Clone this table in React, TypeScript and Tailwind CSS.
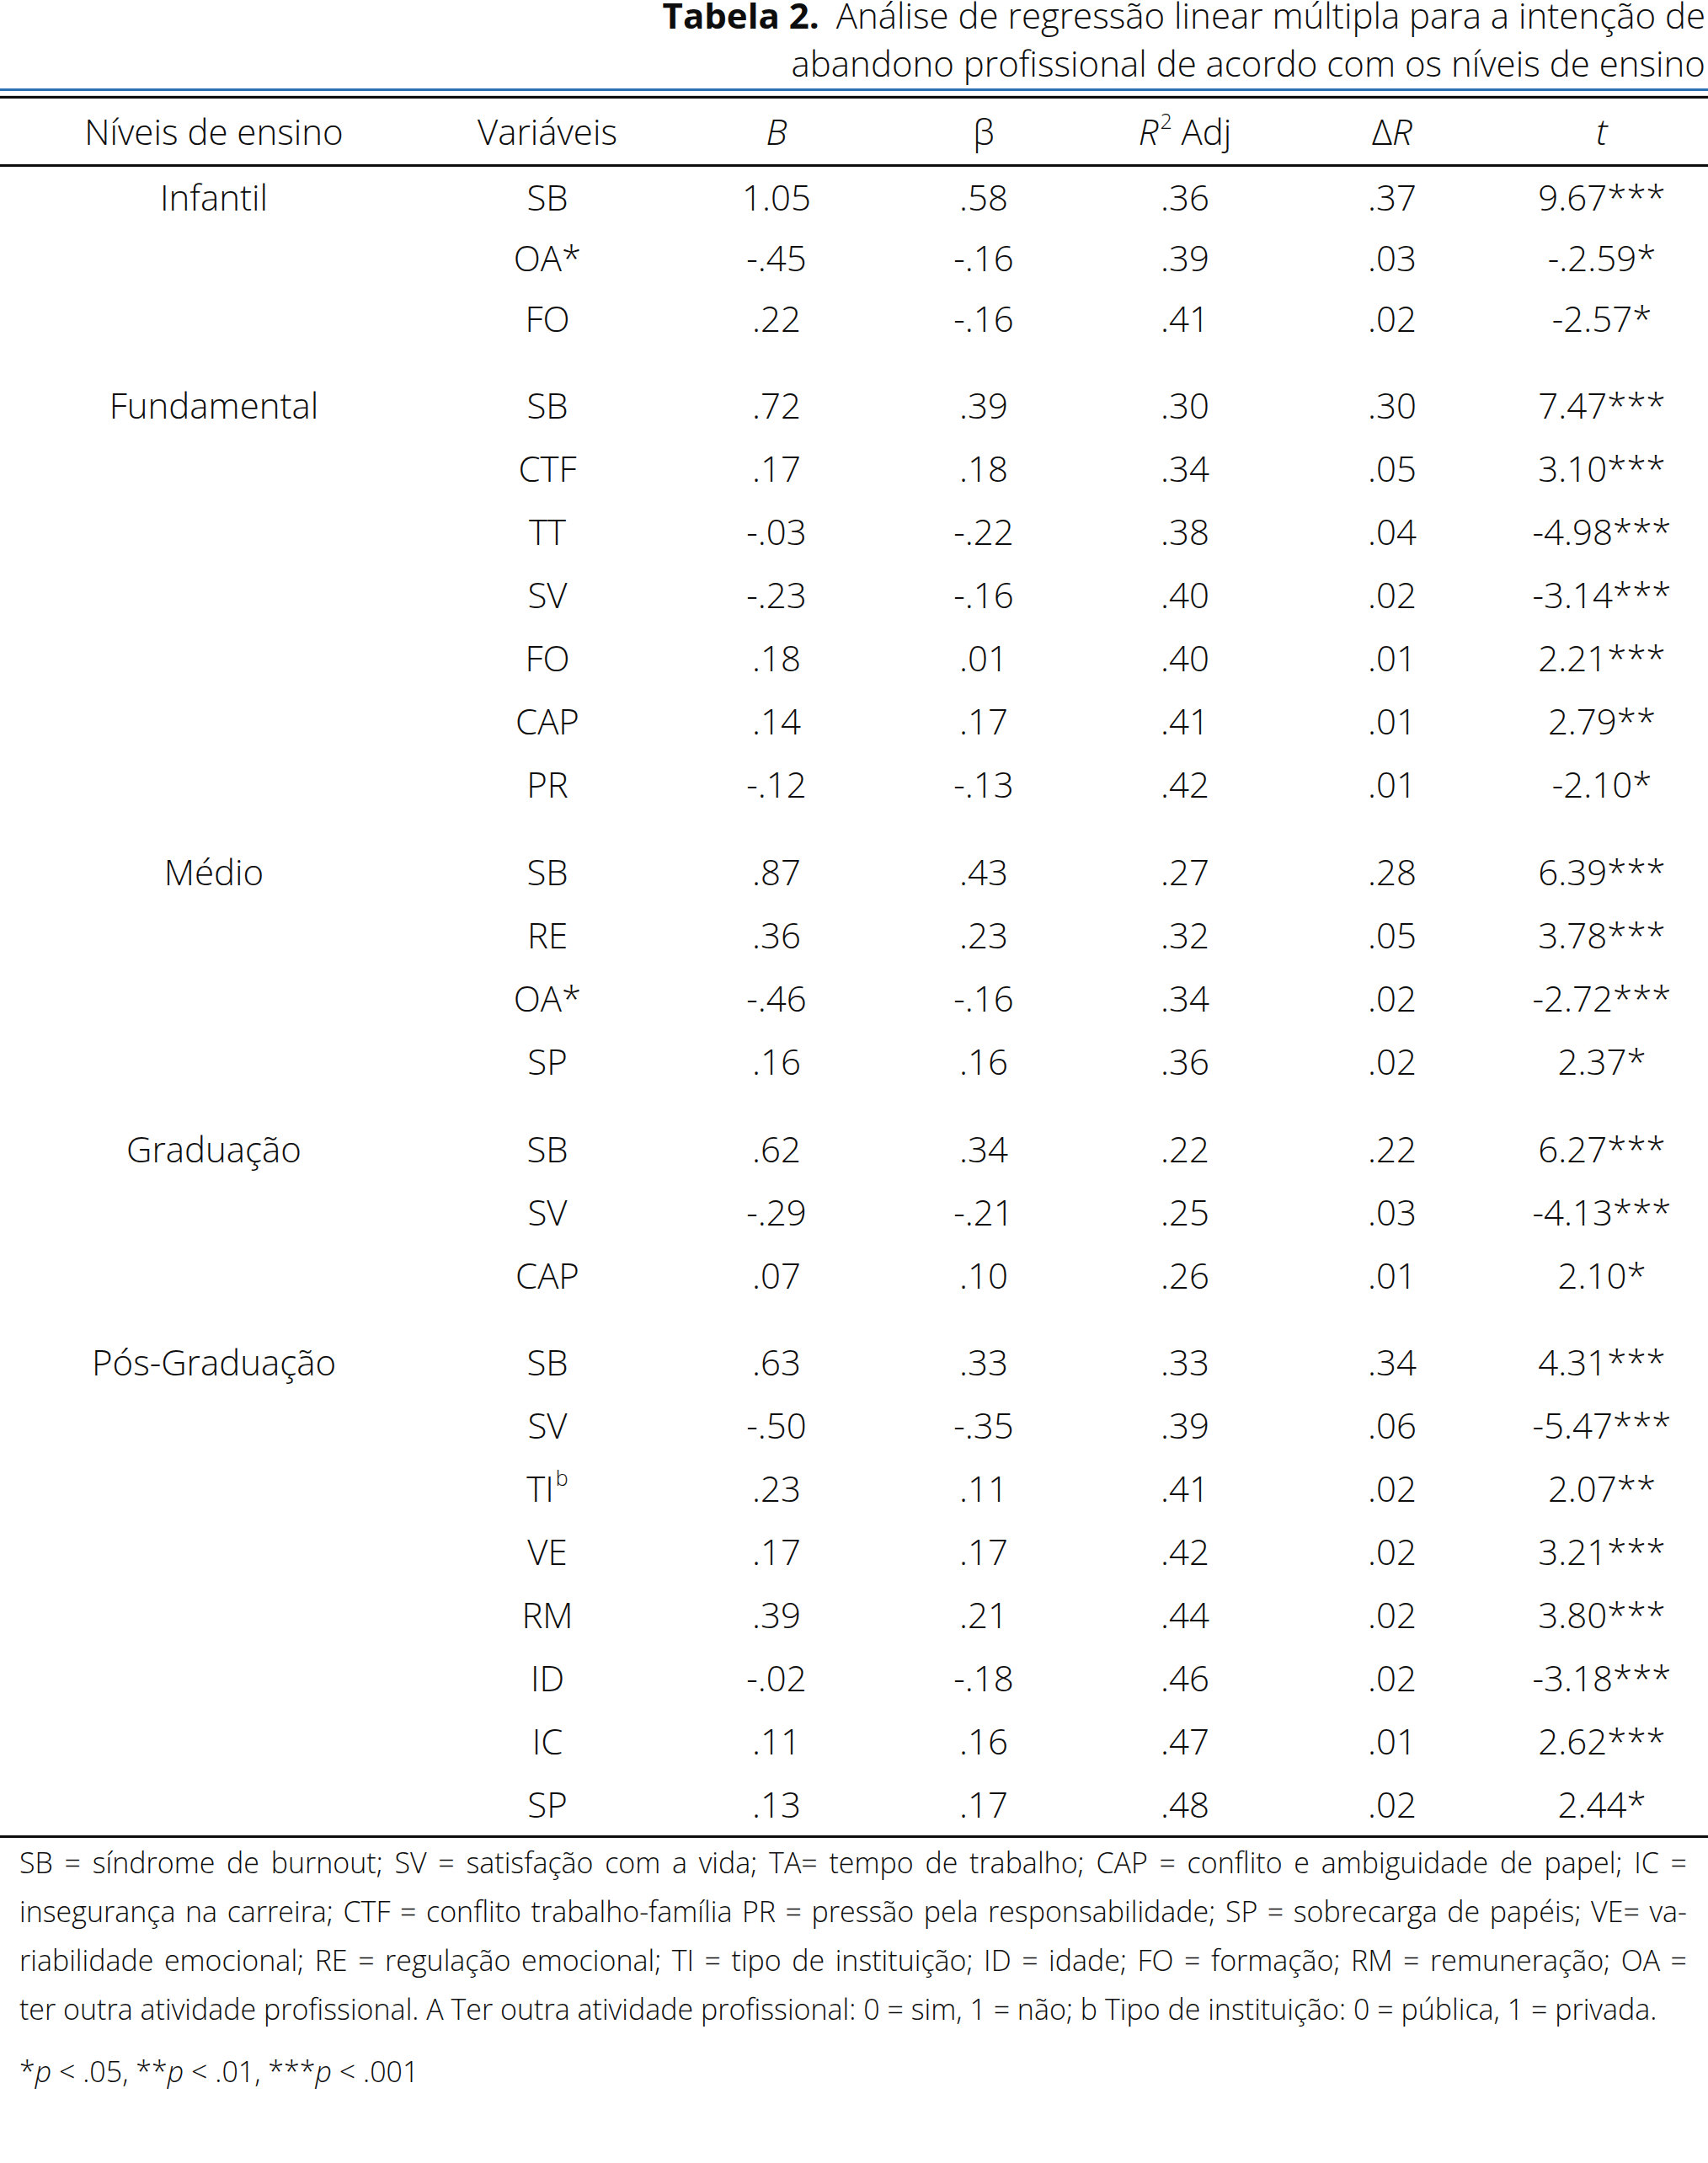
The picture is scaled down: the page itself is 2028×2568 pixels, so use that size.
import React from "react";

type Row = { v: React.ReactNode; b: string; beta: string; r2: string; dr: string; t: string };
type Group = { level: string; rowH: string; rows: Row[] };

const groups: Group[] = [
  {
    level: "Infantil",
    rowH: "h-[72px] leading-[72px]",
    rows: [
      { v: "SB", b: "1.05", beta: ".58", r2: ".36", dr: ".37", t: "9.67***" },
      { v: "OA*", b: "-.45", beta: "-.16", r2: ".39", dr: ".03", t: "-.2.59*" },
      { v: "FO", b: ".22", beta: "-.16", r2: ".41", dr: ".02", t: "-2.57*" },
    ],
  },
  {
    level: "Fundamental",
    rowH: "h-[75px] leading-[75px]",
    rows: [
      { v: "SB", b: ".72", beta: ".39", r2: ".30", dr: ".30", t: "7.47***" },
      { v: "CTF", b: ".17", beta: ".18", r2: ".34", dr: ".05", t: "3.10***" },
      { v: "TT", b: "-.03", beta: "-.22", r2: ".38", dr: ".04", t: "-4.98***" },
      { v: "SV", b: "-.23", beta: "-.16", r2: ".40", dr: ".02", t: "-3.14***" },
      { v: "FO", b: ".18", beta: ".01", r2: ".40", dr: ".01", t: "2.21***" },
      { v: "CAP", b: ".14", beta: ".17", r2: ".41", dr: ".01", t: "2.79**" },
      { v: "PR", b: "-.12", beta: "-.13", r2: ".42", dr: ".01", t: "-2.10*" },
    ],
  },
  {
    level: "Médio",
    rowH: "h-[75px] leading-[75px]",
    rows: [
      { v: "SB", b: ".87", beta: ".43", r2: ".27", dr: ".28", t: "6.39***" },
      { v: "RE", b: ".36", beta: ".23", r2: ".32", dr: ".05", t: "3.78***" },
      { v: "OA*", b: "-.46", beta: "-.16", r2: ".34", dr: ".02", t: "-2.72***" },
      { v: "SP", b: ".16", beta: ".16", r2: ".36", dr: ".02", t: "2.37*" },
    ],
  },
  {
    level: "Graduação",
    rowH: "h-[75px] leading-[75px]",
    rows: [
      { v: "SB", b: ".62", beta: ".34", r2: ".22", dr: ".22", t: "6.27***" },
      { v: "SV", b: "-.29", beta: "-.21", r2: ".25", dr: ".03", t: "-4.13***" },
      { v: "CAP", b: ".07", beta: ".10", r2: ".26", dr: ".01", t: "2.10*" },
    ],
  },
  {
    level: "Pós-Graduação",
    rowH: "h-[75px] leading-[75px]",
    rows: [
      { v: "SB", b: ".63", beta: ".33", r2: ".33", dr: ".34", t: "4.31***" },
      { v: "SV", b: "-.50", beta: "-.35", r2: ".39", dr: ".06", t: "-5.47***" },
      {
        v: (
          <>
            TI<sup className="text-[25px] ml-[2px] -top-[0.75em]">b</sup>
          </>
        ),
        b: ".23",
        beta: ".11",
        r2: ".41",
        dr: ".02",
        t: "2.07**",
      },
      { v: "VE", b: ".17", beta: ".17", r2: ".42", dr: ".02", t: "3.21***" },
      { v: "RM", b: ".39", beta: ".21", r2: ".44", dr: ".02", t: "3.80***" },
      { v: "ID", b: "-.02", beta: "-.18", r2: ".46", dr: ".02", t: "-3.18***" },
      { v: "IC", b: ".11", beta: ".16", r2: ".47", dr: ".01", t: "2.62***" },
      { v: "SP", b: ".13", beta: ".17", r2: ".48", dr: ".02", t: "2.44*" },
    ],
  },
];

const cols = "grid grid-cols-[508px_284px_260px_232px_246px_246px_252px] text-center";

export default function App() {
  return (
    <div
      className="w-[2028px] h-[2568px] overflow-hidden bg-white text-[#0d0d0d] font-light"
      style={{ fontFamily: '"Open Sans", "Noto Sans", sans-serif' }}
    >
      {/* caption */}
      <div className="-mt-[11px] pr-[3px] text-right text-[42px] leading-[57px]">
        <div>
          <span className="font-bold">Tabela 2.</span>
          <span className="ml-[20px]">Análise de regressão linear múltipla para a intenção de</span>
        </div>
        <div>abandono profissional de acordo com os níveis de ensino</div>
      </div>

      {/* top rules */}
      <div className="mt-[2px] h-[3px] bg-[#2b70b3]" />
      <div className="mt-[5px] h-[1px] bg-[#d9d9d9]" />
      <div className="h-[3px] bg-[#0d0d0d]" />

      {/* header */}
      <div className={`${cols} h-[81px] text-[42px] leading-[77px] border-b-[3px] border-[#0d0d0d]`}>
        <div>Níveis de ensino</div>
        <div>Variáveis</div>
        <div className="italic">B</div>
        <div>β</div>
        <div>
          <span className="italic">R</span>
          <sup className="text-[25px] ml-[2px] -top-[0.75em]">2</sup> Adj
        </div>
        <div>
          Δ<span className="italic">R</span>
        </div>
        <div className="italic">t</div>
      </div>

      {/* body */}
      <div className="text-[42px] border-b-[3px] border-[#0d0d0d]">
        {groups.map((g, gi) => (
          <div key={g.level} className={gi === 0 ? "" : gi === 4 ? "pt-[28px]" : "pt-[29px]"}>
            {g.rows.map((r, ri) => (
              <div key={ri} className={`${cols} ${g.rowH}`}>
                <div>{ri === 0 ? g.level : ""}</div>
                <div>{r.v}</div>
                <div>{r.b}</div>
                <div>{r.beta}</div>
                <div>{r.r2}</div>
                <div>{r.dr}</div>
                <div>{r.t}</div>
              </div>
            ))}
          </div>
        ))}
      </div>

      {/* notes */}
      <div className="pl-[23px] pr-[25px] text-[34px] leading-[58px]">
        <div className="whitespace-nowrap text-justify [text-align-last:justify]">
          SB = síndrome de burnout; SV = satisfação com a vida; TA= tempo de trabalho; CAP = conflito e ambiguidade de papel; IC =
        </div>
        <div className="whitespace-nowrap text-justify [text-align-last:justify]">
          insegurança na carreira; CTF = conflito trabalho-família PR = pressão pela responsabilidade; SP = sobrecarga de papéis; VE= va-
        </div>
        <div className="whitespace-nowrap text-justify [text-align-last:justify]">
          riabilidade emocional; RE = regulação emocional; TI = tipo de instituição; ID = idade; FO = formação; RM = remuneração; OA =
        </div>
        <div className="whitespace-nowrap">
          ter outra atividade profissional. A Ter outra atividade profissional: 0 = sim, 1 = não; b Tipo de instituição: 0 = pública, 1 = privada.
        </div>
        <div className="mt-[16px]">
          *<span className="italic">p</span> &lt; .05, **<span className="italic">p</span> &lt; .01, ***
          <span className="italic">p</span> &lt; .001
        </div>
      </div>
    </div>
  );
}
